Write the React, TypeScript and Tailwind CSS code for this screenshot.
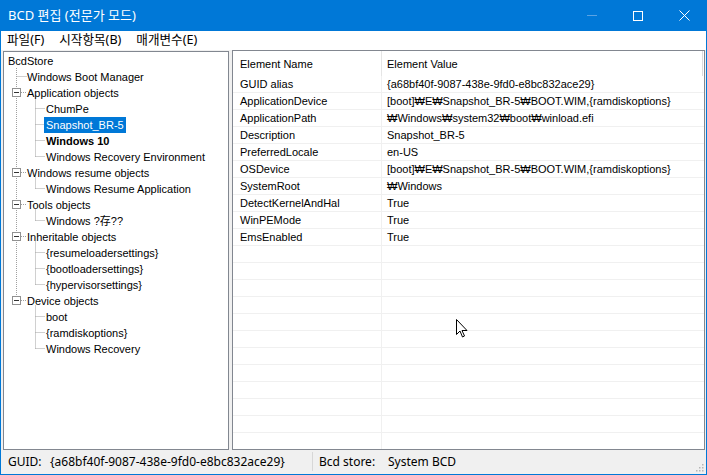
import React from "react";

const tree: { label: string; level: number; bold?: boolean; selected?: boolean }[] = [
  { label: "BcdStore", level: 0 },
  { label: "Windows Boot Manager", level: 1 },
  { label: "Application objects", level: 1 },
  { label: "ChumPe", level: 2 },
  { label: "Snapshot_BR-5", level: 2, selected: true },
  { label: "Windows 10", level: 2, bold: true },
  { label: "Windows Recovery Environment", level: 2 },
  { label: "Windows resume objects", level: 1 },
  { label: "Windows Resume Application", level: 2 },
  { label: "Tools objects", level: 1 },
  { label: "Windows ?存??", level: 2 },
  { label: "Inheritable objects", level: 1 },
  { label: "{resumeloadersettings}", level: 2 },
  { label: "{bootloadersettings}", level: 2 },
  { label: "{hypervisorsettings}", level: 2 },
  { label: "Device objects", level: 1 },
  { label: "boot", level: 2 },
  { label: "{ramdiskoptions}", level: 2 },
  { label: "Windows Recovery", level: 2 },
];

const rows: [string, string][] = [
  ["GUID alias", "{a68bf40f-9087-438e-9fd0-e8bc832ace29}"],
  ["ApplicationDevice", "[boot]₩E₩Snapshot_BR-5₩BOOT.WIM,{ramdiskoptions}"],
  ["ApplicationPath", "₩Windows₩system32₩boot₩winload.efi"],
  ["Description", "Snapshot_BR-5"],
  ["PreferredLocale", "en-US"],
  ["OSDevice", "[boot]₩E₩Snapshot_BR-5₩BOOT.WIM,{ramdiskoptions}"],
  ["SystemRoot", "₩Windows"],
  ["DetectKernelAndHal", "True"],
  ["WinPEMode", "True"],
  ["EmsEnabled", "True"],
];

// tree connector drawing (coords relative to panel inner origin at page (4,52))
function TreeLines() {
  const ox = 4;
  const oy = 52;
  const cy = (i: number) => 60 + 16 * i - oy + 0.5;
  const dot = "#a0a0a0";
  const boxes = [2, 7, 9, 11, 15];
  const groups: [number, number[]][] = [
    [2, [3, 4, 5, 6]],
    [7, [8]],
    [9, [10]],
    [11, [12, 13, 14]],
    [15, [16, 17, 18]],
  ];
  const x1 = 16 - ox + 0.5;
  const x2 = 35 - ox + 0.5;
  return (
    <svg className="absolute left-0 top-0" width="224" height="400">
      <line x1={x1} y1={68 - oy} x2={x1} y2={cy(15)} stroke={dot} strokeDasharray="1 1" />
      <line x1={x1} y1={cy(1)} x2={27 - ox} y2={cy(1)} stroke={dot} strokeDasharray="1 1" />
      {groups.map(([p, kids]) => (
        <g key={p}>
          <line x1={x2} y1={cy(p) + 5} x2={x2} y2={cy(kids[kids.length - 1])} stroke={dot} strokeDasharray="1 1" />
          {kids.map((k) => (
            <line key={k} x1={x2} y1={cy(k)} x2={45 - ox} y2={cy(k)} stroke={dot} strokeDasharray="1 1" />
          ))}
        </g>
      ))}
      {boxes.map((b) => (
        <g key={b}>
          <line x1={21 - ox} y1={cy(b)} x2={27 - ox} y2={cy(b)} stroke={dot} strokeDasharray="1 1" />
          <rect x={12 - ox + 0.5} y={cy(b) - 4} width="8" height="8" fill="#fff" stroke="#919191" />
          <line x1={14 - ox} y1={cy(b)} x2={19 - ox} y2={cy(b)} stroke="#333" />
        </g>
      ))}
    </svg>
  );
}

export default function App() {
  const font = { fontFamily: '"Liberation Sans", Arial, sans-serif' };
  const kfont = { fontFamily: '"Noto Sans", "Noto Sans CJK KR", sans-serif' };
  return (
    <div className="w-[707px] h-[475px] flex flex-col bg-[#f0f0f0] border-x border-b border-[#0078d7] overflow-hidden relative">
      {/* title bar */}
      <div className="h-[31px] shrink-0 bg-[#0078d7] flex items-center text-white -mx-px" style={kfont}>
        <div className="pl-[8px] text-[13px] flex-1 leading-none pb-[1px]">BCD 편집 (전문가 모드)</div>
        <div className="flex items-center h-full">
          <div className="w-[46px] h-full flex items-center justify-center">
            <div className="w-[10px] h-px bg-[#5aa3e4]" />
          </div>
          <div className="w-[46px] h-full flex items-center justify-center">
            <div className="w-[10px] h-[10px] border border-white" />
          </div>
          <div className="w-[46px] h-full flex items-center justify-center">
            <svg width="11" height="11" viewBox="0 0 11 11">
              <path d="M0.5 0.5 L10.5 10.5 M10.5 0.5 L0.5 10.5" stroke="#fff" strokeWidth="1" />
            </svg>
          </div>
        </div>
      </div>
      {/* menu */}
      <div className="h-[19px] shrink-0 bg-white flex items-center text-[12.6px] text-black gap-[15px] pl-[6px]" style={kfont}>
        <span>파일(F)</span>
        <span>시작항목(B)</span>
        <span>매개변수(E)</span>
      </div>
      {/* main */}
      <div className="flex-1 flex pt-[1px] pl-[2px] gap-[3px] min-h-0">
        {/* tree panel */}
        <div className="w-[226px] h-[399px] bg-white border border-[#828790] relative overflow-hidden text-[11px] text-black" style={font}>
          <TreeLines />
          <div className="relative flex flex-col pt-[1px]">
            {tree.map((t, i) => (
              <div key={i} className="h-[16px] flex items-center">
                <span
                  className={
                    (t.level === 0 ? "ml-[2px] " : t.level === 1 ? "ml-[21px] " : "ml-[40px] ") +
                    (t.selected ? "bg-[#0078d7] text-white px-[2px] h-[16px] flex items-center " : "px-[2px] ") +
                    (t.bold ? "font-bold" : "")
                  }
                  style={t.label.includes("存") ? { fontFamily: '"Liberation Sans", "Noto Sans CJK SC", sans-serif' } : undefined}
                >
                  {t.label}
                </span>
              </div>
            ))}
          </div>
        </div>
        {/* list panel */}
        <div className="flex-1 h-[400px] -mt-[1px] mr-[1px] bg-white border border-[#828790] overflow-hidden relative text-[11px] text-black" style={font}>
          <div className="h-[25px] flex items-center">
            <div className="w-[149px] h-full flex items-center pl-[7px] pt-[2px] border-r border-[#e5e5e5]">Element Name</div>
            <div className="flex-1 h-full flex items-center pl-[5px] pt-[2px] border-r border-[#dcdcdc] mr-[1px]">Element Value</div>
          </div>
          {Array.from({ length: 22 }).map((_, i) => {
            const r = rows[i];
            return (
              <div key={i} className="h-[17px] flex border-b border-[#f0f0f0]">
                <div className="w-[149px] flex items-center pl-[7px] pt-[1px] border-r border-[#f0f0f0] whitespace-nowrap">{r ? r[0] : ""}</div>
                <div className="flex-1 flex items-center pl-[5px] pt-[1px] whitespace-nowrap">{r ? r[1] : ""}</div>
              </div>
            );
          })}
        </div>
      </div>
      {/* status bar */}
      <div className="h-[25px] shrink-0 flex items-center text-[12px] text-black relative" style={kfont}>
        <span className="pl-[7px] w-[49px]">GUID:</span>
        <span className="w-[262px]">{"{a68bf40f-9087-438e-9fd0-e8bc832ace29}"}</span>
        <div className="w-px h-[19px] bg-[#d7d7d7]" />
        <span className="pl-[6px] w-[75px]">Bcd store:</span>
        <span>System BCD</span>
        <svg className="absolute right-[2px] bottom-[2px]" width="10" height="10" viewBox="0 0 10 10">
          {[
            [8, 2], [8, 5], [5, 5], [8, 8], [5, 8], [2, 8],
          ].map(([x, y], i) => (
            <rect key={i} x={x} y={y} width="1.5" height="1.5" fill="#b5b5b5" />
          ))}
        </svg>
      </div>
      {/* mouse cursor */}
      <svg className="absolute left-[455px] top-[319px]" width="13" height="20" viewBox="0 0 13 20">
        <path d="M0.5 0.5 L0.5 15.5 L4 12 L6.5 18 L8.5 17 L6 11.5 L11 11.5 Z" fill="#fff" stroke="#000" strokeWidth="1" strokeLinejoin="miter" />
      </svg>
    </div>
  );
}
